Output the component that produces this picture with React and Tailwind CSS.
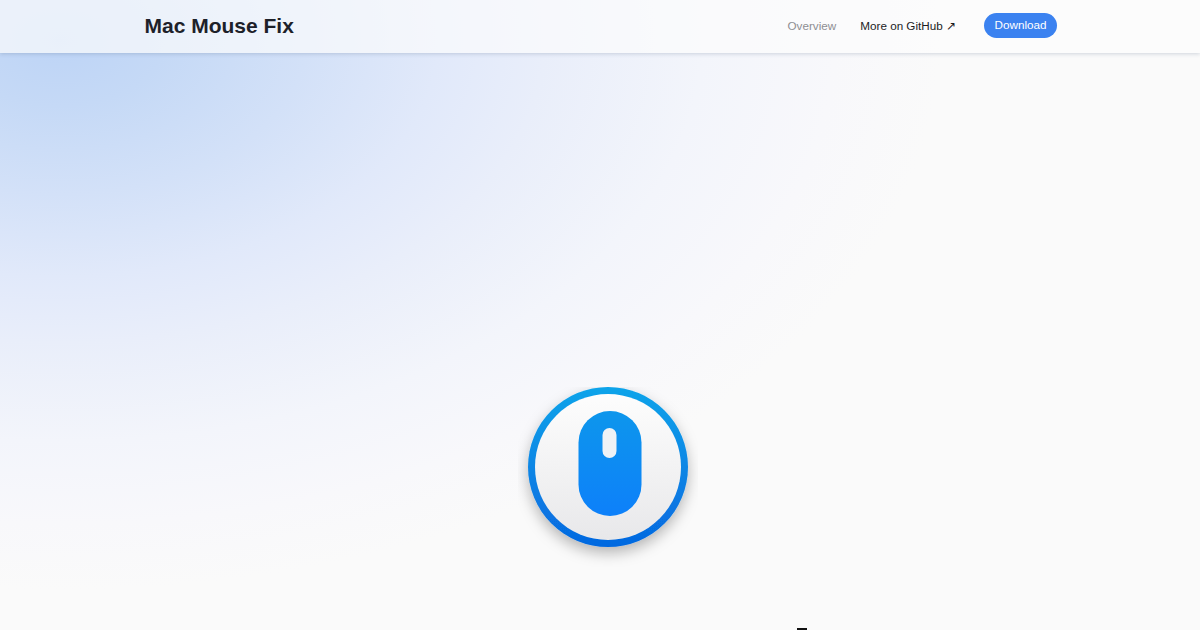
export default function App() {
  return (
    <div className="h-[630px] w-[1200px] overflow-hidden bg-[#fafafa] bg-[radial-gradient(880px_550px_at_60px_40px,#bdd4f6_0%,#c5d9f6_12%,#d3e1f8_28%,#e1e9fa_43%,#e9eefa_55%,#f3f5fb_73%,#f8f8fb_88%,#fafafa_100%)] font-['Liberation_Sans',Arial,sans-serif]">
      <header className="flex h-[53px] items-center bg-[#fcfcfc]/70 pb-[2px] pl-[144.5px] pr-[143px] shadow-[0_1px_4px_rgba(60,80,120,0.22)]">
        <h1 className="text-[21px] font-bold leading-none text-[#1d2129]">Mac Mouse Fix</h1>
        <nav className="mb-[1px] ml-auto flex items-center text-[11.7px] leading-none">
          <a className="mt-[1px] text-[#8e8e93]">Overview</a>
          <a className="ml-6 mt-[1px] text-[#1d1d1f]">More on GitHub ↗</a>
          <a className="ml-7 flex h-[25px] w-[73px] items-center justify-center rounded-full bg-[#3b82f0] text-white">Download</a>
        </nav>
      </header>
      <main className="flex flex-col">
        <div className="ml-[518px] mt-[334px] h-[180px] w-[180px]">
          <svg viewBox="0 0 180 180" width="180" height="180">
            <defs>
              <linearGradient id="ring" x1="0" y1="0" x2="0" y2="1">
                <stop offset="0" stopColor="#10a4ea" />
                <stop offset="1" stopColor="#0568e0" />
              </linearGradient>
              <linearGradient id="face" x1="0" y1="0" x2="0" y2="1">
                <stop offset="0" stopColor="#fdfdfd" />
                <stop offset="1" stopColor="#e8e8ea" />
              </linearGradient>
              <linearGradient id="mouse" x1="0" y1="0" x2="0" y2="1">
                <stop offset="0" stopColor="#0a96ec" />
                <stop offset="1" stopColor="#0a80fa" />
              </linearGradient>
              <filter id="shadow" x="-25%" y="-25%" width="150%" height="150%">
                <feDropShadow dx="0" dy="6" stdDeviation="7" floodColor="#000" floodOpacity="0.28" />
              </filter>
              <filter id="soft" x="-5%" y="-5%" width="110%" height="110%">
                <feGaussianBlur stdDeviation="0.7" />
              </filter>
            </defs>
            <circle cx="90" cy="80" r="80" fill="url(#ring)" filter="url(#shadow)" />
            <g filter="url(#soft)">
              <circle cx="90" cy="80" r="73" fill="url(#face)" />
              <rect x="60.5" y="24" width="63" height="105" rx="31.5" fill="url(#mouse)" />
              <rect x="84.5" y="41" width="14" height="30" rx="7" fill="#eef2f6" />
            </g>
          </svg>
        </div>
        <div className="ml-[797px] mt-[61px] h-[2px] w-[10px] bg-[#111]" />
      </main>
    </div>
  );
}
